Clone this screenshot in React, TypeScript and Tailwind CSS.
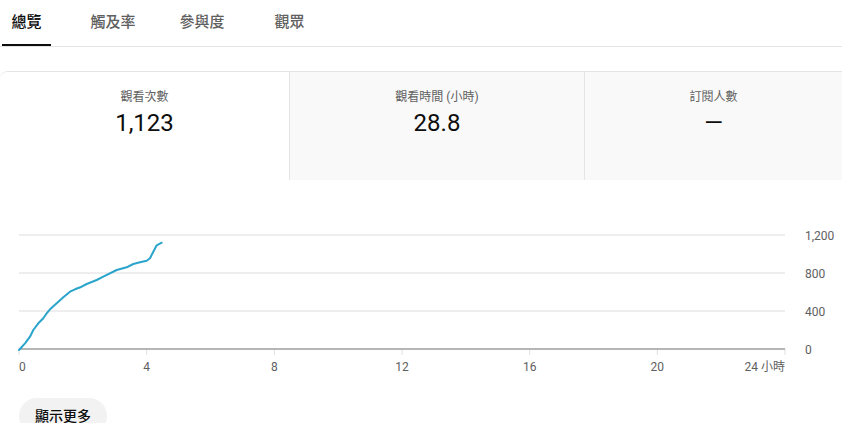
import React from 'react';

const FONT = "font-['Roboto','Noto_Sans_CJK_TC',sans-serif]";

const tabs = [
  { label: '總覽', active: true, gap: 'mr-[30px]' },
  { label: '觸及率', active: false, gap: 'mr-[25px]' },
  { label: '參與度', active: false, gap: 'mr-[31px]' },
  { label: '觀眾', active: false, gap: '' },
];

const stats = [
  { label: '觀看次數', value: '1,123', box: 'w-[289px] bg-white' },
  { label: '觀看時間 (小時)', value: '28.8', box: 'w-[295px] bg-[#f9f9f9] border-l border-[#e5e5e5]' },
  { label: '訂閱人數', value: '—', box: 'flex-1 bg-[#f9f9f9] border-l border-[#e5e5e5]' },
];

// chart coordinates (svg local, origin at top of chart area)
const LEFT = 19;
const RIGHT = 785;
const BASE = 169;
const grid = [55, 93, 131];
const yLabels = ['1,200', '800', '400', '0'];
const xTicks = [0, 4, 8, 12, 16, 20, 24];

const points: [number, number][] = [
  [19, 170], [25, 163.3], [30, 156.7], [33.3, 150], [38.3, 143.3], [43.3, 138.3],
  [46.7, 133.3], [50, 129.3], [56.7, 123.3], [63.3, 117.3], [70, 111.7], [75, 109.3],
  [81.7, 106.7], [86.7, 104], [96.7, 100], [103.3, 96.7], [116.7, 90], [126.7, 87.3],
  [133.3, 84], [140, 82.3], [146.7, 80.7], [150, 78.3], [153.3, 71.7], [156.7, 65.3],
  [161.7, 62.7],
];

function ViewsChart() {
  const step = (RIGHT - LEFT) / 6;
  return (
    <svg width="842" height="210" className="block">
      {grid.map((y) => (
        <line key={y} x1={LEFT} x2={RIGHT} y1={y} y2={y} stroke="#eeeeee" strokeWidth="2" />
      ))}
      {xTicks.map((t, i) => (
        <line
          key={t}
          x1={LEFT + i * step}
          x2={LEFT + i * step}
          y1={BASE}
          y2={BASE + 6}
          stroke="#e0e0e0"
          strokeWidth="1"
        />
      ))}
      <line x1={LEFT} x2={RIGHT} y1={BASE} y2={BASE} stroke="#9e9e9e" strokeWidth="1.5" />
      <polyline
        points={points.map((p) => p.join(',')).join(' ')}
        fill="none"
        stroke="#2ba4cc"
        strokeWidth="2"
        strokeLinejoin="round"
        strokeLinecap="round"
      />
      {[...grid, BASE].map((y, i) => (
        <text key={y} x="805" y={y + 4.5} fontSize="12" fill="#606060">
          {yLabels[i]}
        </text>
      ))}
      {xTicks.map((t, i) => (
        <text
          key={t}
          x={LEFT + i * step}
          y="191"
          fontSize="12"
          fill="#606060"
          textAnchor={i === 0 ? 'start' : i === 6 ? 'end' : 'middle'}
        >
          {i === 6 ? '24 小時' : t}
        </text>
      ))}
    </svg>
  );
}

export default function App() {
  return (
    <div className={`${FONT} w-[842px] h-[423px] overflow-hidden bg-white text-[#0d0d0d]`}>
      <div className="flex h-[47px] border-b border-[#e5e5e5] pl-[2px]">
        {tabs.map((tab) => (
          <div
            key={tab.label}
            className={`flex h-full items-center px-[9.5px] ${tab.gap} text-[15px] font-medium border-b-2 ${
              tab.active ? 'border-[#0d0d0d] text-[#0d0d0d]' : 'border-transparent text-[#606060]'
            }`}
          >
            {tab.label}
          </div>
        ))}
      </div>

      <div className="mt-[24px] flex h-[109px] border-t border-[#e5e5e5] rounded-tl-[8px] overflow-hidden">
        {stats.map((s) => (
          <div key={s.label} className={`${s.box} flex flex-col items-center pt-[17px]`}>
            <p className="text-[12px] leading-[16px] text-[#606060]">{s.label}</p>
            <p className="mt-[2px] text-[24px] leading-[32px] text-[#0d0d0d]">{s.value}</p>
          </div>
        ))}
      </div>

      <ViewsChart />

      <button className="ml-[19px] mt-[8px] h-[36px] rounded-full bg-[#f2f2f2] px-[16px] text-[14px] font-medium text-[#0d0d0d]">
        顯示更多
      </button>
    </div>
  );
}
